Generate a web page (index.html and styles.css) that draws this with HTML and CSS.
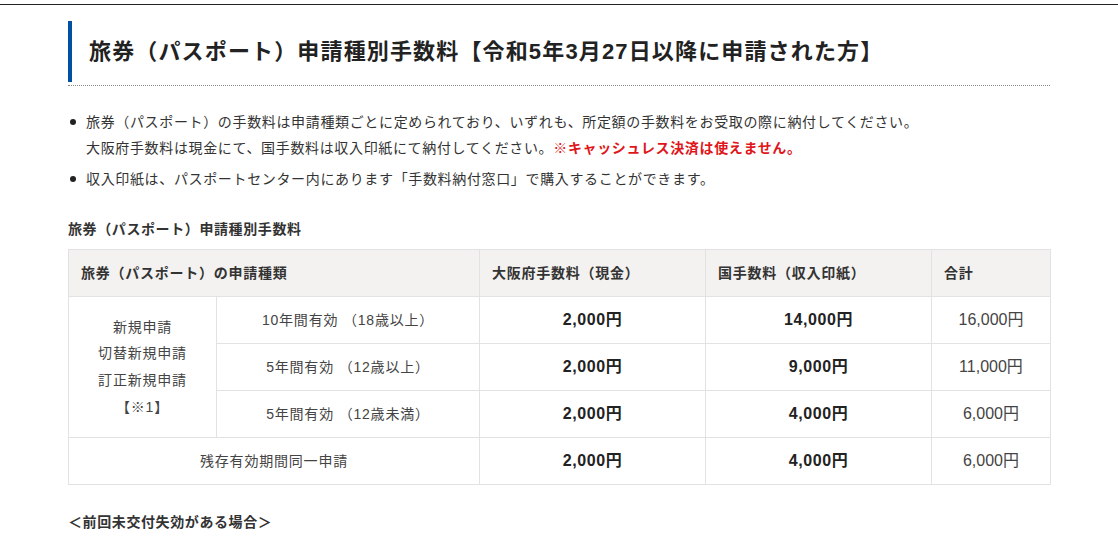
FILE: index.html
```html
<!DOCTYPE html>
<html lang="ja">
<head>
<meta charset="utf-8">
<title>旅券（パスポート）申請種別手数料</title>
<link rel="stylesheet" href="styles.css">
</head>
<body>
<div class="topline"></div>
<main class="content">
  <div class="heading-wrap">
    <h2 class="heading">旅券（パスポート）申請種別手数料【令和5年3月27日以降に申請された方】</h2>
  </div>
  <ul class="notes">
    <li>旅券（パスポート）の手数料は申請種類ごとに定められており、いずれも、所定額の手数料をお受取の際に納付してください。<br>大阪府手数料は現金にて、国手数料は収入印紙にて納付してください。<strong class="warn">※キャッシュレス決済は使えません。</strong></li>
    <li>収入印紙は、パスポートセンター内にあります「手数料納付窓口」で購入することができます。</li>
  </ul>
  <h3 class="subheading">旅券（パスポート）申請種別手数料</h3>
  <table class="fees">
    <colgroup>
      <col class="c1"><col class="c2"><col class="c3"><col class="c4"><col class="c5">
    </colgroup>
    <thead>
      <tr>
        <th colspan="2">旅券（パスポート）の申請種類</th>
        <th>大阪府手数料（現金）</th>
        <th>国手数料（収入印紙）</th>
        <th>合計</th>
      </tr>
    </thead>
    <tbody>
      <tr>
        <td rowspan="3" class="kind">新規申請<br>切替新規申請<br>訂正新規申請<br>【※1】</td>
        <td>10年間有効 （18歳以上）</td>
        <td class="money">2,000円</td>
        <td class="money">14,000円</td>
        <td class="total">16,000円</td>
      </tr>
      <tr>
        <td>5年間有効 （12歳以上）</td>
        <td class="money">2,000円</td>
        <td class="money">9,000円</td>
        <td class="total">11,000円</td>
      </tr>
      <tr>
        <td>5年間有効 （12歳未満）</td>
        <td class="money">2,000円</td>
        <td class="money">4,000円</td>
        <td class="total">6,000円</td>
      </tr>
      <tr>
        <td colspan="2">残存有効期間同一申請</td>
        <td class="money">2,000円</td>
        <td class="money">4,000円</td>
        <td class="total">6,000円</td>
      </tr>
    </tbody>
  </table>
  <h3 class="subheading last">＜前回未交付失効がある場合＞</h3>
</main>
</body>
</html>
```

FILE: styles.css
```css
html, body {
  margin: 0;
  padding: 0;
  background: #fff;
}
body {
  font-family: "Liberation Sans", "Noto Sans CJK JP", sans-serif;
  color: #333;
  font-size: 14px;
  padding-top: 4px;
}
.topline {
  border-top: 1px solid #222;
}
.content {
  width: 982px;
  margin-left: 68px;
  padding-top: 16px;
}
.heading-wrap {
  border-bottom: 1px dotted #8a8a8a;
  padding-bottom: 3px;
}
.heading {
  margin: 0;
  border-left: 4px solid #0050a2;
  padding: 16px 0 15px 17px;
  font-size: 22px;
  line-height: 30px;
  font-weight: 700;
  letter-spacing: 1.15px;
  color: #222;
}
.notes {
  list-style: none;
  margin: 23px 0 0;
  padding: 0 0 0 18px;
  letter-spacing: 0.65px;
}
.notes li {
  position: relative;
  line-height: 26px;
  margin-bottom: 5px;
}
.notes li::before {
  content: "";
  position: absolute;
  left: -16px;
  top: 10px;
  width: 6px;
  height: 6px;
  border-radius: 50%;
  background: #222;
}
.warn {
  color: #e0161b;
  font-weight: 700;
}
.subheading {
  margin: 27px 0 10px;
  font-size: 14px;
  line-height: 20px;
  font-weight: 700;
  letter-spacing: 0.6px;
  color: #333;
}
.subheading.last {
  margin-top: 27px;
}
.fees {
  width: 982px;
  border-collapse: collapse;
  table-layout: fixed;
}
.c1 { width: 148px; }
.c2 { width: 263px; }
.c3 { width: 226px; }
.c4 { width: 226px; }
.c5 { width: 119px; }
.fees th, .fees td {
  border: 1px solid #e2e2e2;
  padding: 13px 12px;
  line-height: 20px;
  font-size: 14px;
}
.fees th {
  background: #f3f2f0;
  text-align: left;
  font-weight: 700;
  color: #333;
  letter-spacing: 0.75px;
}
.fees td {
  text-align: center;
  color: #444;
  letter-spacing: 0.8px;
}
.fees td.kind {
  line-height: 26.7px;
  padding: 10px 8px;
}
.fees td.money {
  font-weight: 700;
  font-size: 16px;
  color: #222;
  letter-spacing: 0.6px;
}
.fees td.total {
  font-size: 16px;
  letter-spacing: 0;
  color: #444;
}
```
